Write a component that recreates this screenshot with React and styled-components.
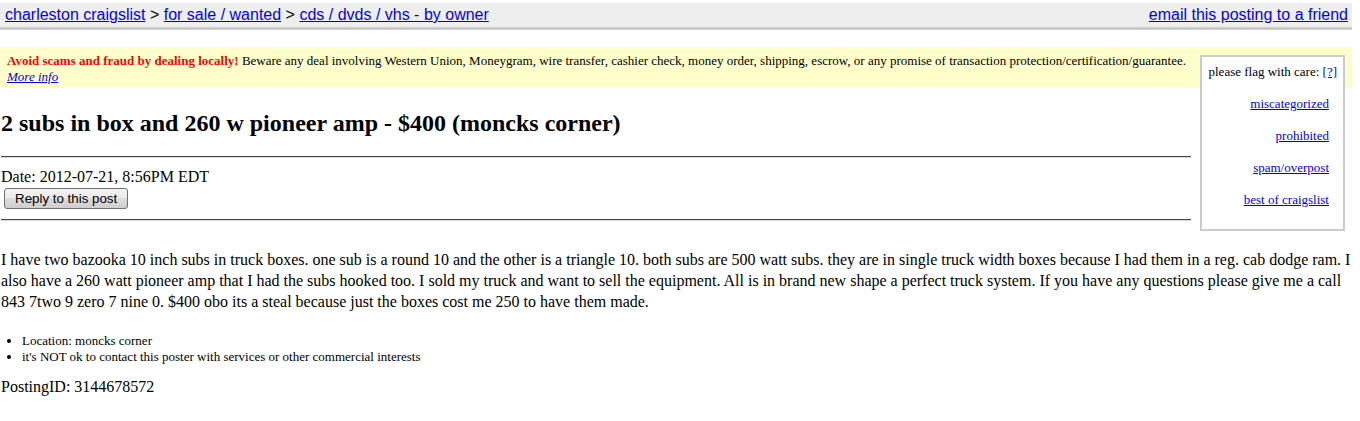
import React from "react";
import styled, { createGlobalStyle } from "styled-components";

const Global = createGlobalStyle`
  html, body { margin: 0; padding: 0; background: #fff; }
  body {
    font-family: "Liberation Serif", "Times New Roman", serif;
    font-size: 16px;
    color: #000;
  }
  a { color: #0000ee; }
`;

const Page = styled.div`
  padding: 3px 8px 0 0;
`;

const Header = styled.div`
  display: flex;
  justify-content: space-between;
  align-items: center;
  background: #eeeeee;
  border-bottom: 3px solid #cccccc;
  padding: 3px 4px 3px 5px;
  font-family: "Liberation Sans", Arial, sans-serif;
  font-size: 16px;
  line-height: 18px;
`;

const Crumbs = styled.div``;

const Warning = styled.div`
  margin-top: 17px;
  background: #ffffcc;
  padding: 6px 7px 3px 7px;
  font-size: 13px;
  line-height: 16px;
`;

const Alert = styled.b`
  color: #ff0000;
`;

const FlagBox = styled.div`
  float: right;
  box-sizing: border-box;
  width: 145px;
  height: 176px;
  margin: 2px 0 0 9px;
  border: 2px solid #cccccc;
  background: #fff;
  font-size: 13px;
  padding: 7px 0 14px 0;
`;

const FlagHead = styled.div`
  padding: 0 6px;
  text-align: right;
  line-height: 16px;
`;

const FlagList = styled.div`
  display: flex;
  flex-direction: column;
  align-items: flex-end;
  gap: 16px;
  padding: 16px 14px 0 0;
  line-height: 16px;
`;

const Content = styled.div`
  padding-left: 1px;
`;

const Title = styled.h2`
  font-size: 24px;
  font-weight: bold;
  margin: 21px 0 19px 0;
  line-height: 28px;
`;

const Rule = styled.hr`
  display: block;
  overflow: hidden;
  border: 0;
  border-top: 1px solid #444;
  border-bottom: 1px solid #ddd;
  height: 0;
  margin: 0;
`;

const DateLine = styled.div`
  margin-top: 10px;
  line-height: 18px;
`;

const ReplyButton = styled.button`
  font-family: "Liberation Sans", Arial, sans-serif;
  font-size: 13.33px;
  height: 21px;
  padding: 0 10px;
  margin: 2px 0 10px 3px;
  border: 1px solid #707070;
  border-radius: 3px;
  background: linear-gradient(#f2f2f2, #ebebeb 50%, #dddddd 50%, #cfcfcf);
  color: #000;
`;

const Body = styled.div`
  margin-top: 28px;
  line-height: 21px;
`;

const Blurbs = styled.ul`
  margin: 21px 0 0 0;
  padding-left: 21px;
  font-size: 13px;
  line-height: 16px;
`;

const PostingId = styled.div`
  margin-top: 13px;
  line-height: 18px;
`;

export default function App() {
  return (
    <>
      <Global />
      <Page>
        <Header>
          <Crumbs>
            <a href="#">charleston craigslist</a> &gt;{" "}
            <a href="#">for sale / wanted</a> &gt;{" "}
            <a href="#">cds / dvds / vhs - by owner</a>
          </Crumbs>
          <a href="#">email this posting to a friend</a>
        </Header>
        <Warning>
          <FlagBox>
            <FlagHead>
              please flag with care: <a href="#">[?]</a>
            </FlagHead>
            <FlagList>
              <a href="#">miscategorized</a>
              <a href="#">prohibited</a>
              <a href="#">spam/overpost</a>
              <a href="#">best of craigslist</a>
            </FlagList>
          </FlagBox>
          <Alert>Avoid scams and fraud by dealing locally!</Alert> Beware any
          deal involving Western Union, Moneygram, wire transfer, cashier check,
          money order, shipping, escrow, or any promise of transaction
          protection/certification/guarantee. <a href="#"><i>More info</i></a>
        </Warning>
        <Content>
          <Title>2 subs in box and 260 w pioneer amp - $400 (moncks corner)</Title>
          <Rule />
          <DateLine>Date: 2012-07-21, 8:56PM EDT</DateLine>
          <ReplyButton>Reply to this post</ReplyButton>
          <Rule />
          <Body>
            I have two bazooka 10 inch subs in truck boxes. one sub is a round
            10 and the other is a triangle 10. both subs are 500 watt subs. they
            are in single truck width boxes because I had them in a reg. cab
            dodge ram. I also have a 260 watt pioneer amp that I had the subs
            hooked too. I sold my truck and want to sell the equipment. All is in
            brand new shape a perfect truck system. If you have any questions
            please give me a call 843 7two 9 zero 7 nine 0. $400 obo its a steal
            because just the boxes cost me 250 to have them made.
          </Body>
          <Blurbs>
            <li>Location: moncks corner</li>
            <li>it's NOT ok to contact this poster with services or other commercial interests</li>
          </Blurbs>
          <PostingId>PostingID: 3144678572</PostingId>
        </Content>
      </Page>
    </>
  );
}
